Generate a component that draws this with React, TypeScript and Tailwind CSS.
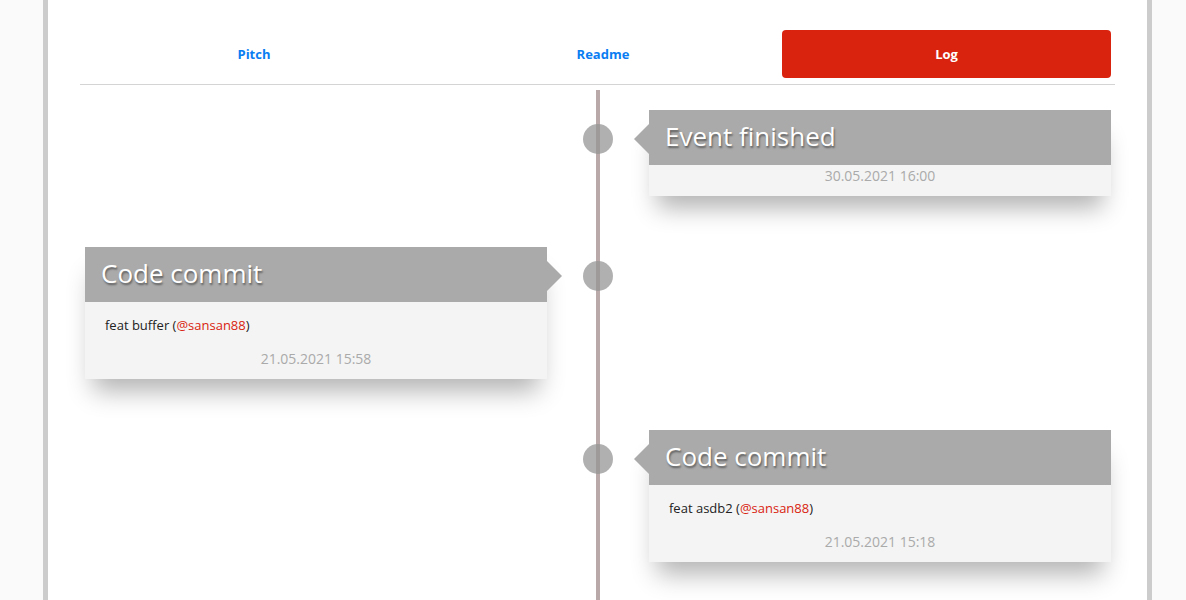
import React from "react";

type Entry = {
  title: string;
  date: string;
  message?: string;
  handle?: string;
  side: "left" | "right";
};

const entries: Entry[] = [
  { title: "Event finished", date: "30.05.2021 16:00", side: "right" },
  {
    title: "Code commit",
    date: "21.05.2021 15:58",
    message: "feat buffer",
    handle: "@sansan88",
    side: "left",
  },
  {
    title: "Code commit",
    date: "21.05.2021 15:18",
    message: "feat asdb2",
    handle: "@sansan88",
    side: "right",
  },
];

const Card = ({ entry }: { entry: Entry }) => {
  return (
    <div className="relative bg-[#f4f4f4] shadow-[0_20px_24px_-8px_rgba(0,0,0,0.3)]">
      {entry.side === "right" ? (
        <span className="absolute left-[-15px] top-[14px] w-0 h-0 border-y-[15px] border-y-transparent border-r-[15px] border-r-[#aaaaaa]" />
      ) : (
        <span className="absolute right-[-15px] top-[14px] w-0 h-0 border-y-[15px] border-y-transparent border-l-[15px] border-l-[#aaaaaa]" />
      )}
      <div className="h-[55px] bg-[#aaaaaa] flex items-center px-4 pb-[3px]">
        <h3 className="text-[26px] leading-none text-white [text-shadow:1px_2px_2px_rgba(0,0,0,0.45)]">
          {entry.title}
        </h3>
      </div>
      {entry.message && (
        <p className="pt-[14px] px-5 text-[13px] leading-[18px] text-[#222] mb-[14px]">
          {entry.message} (
          <a href="#" className="text-[#d9230f]">
            {entry.handle}
          </a>
          )
        </p>
      )}
      <p className="text-center text-sm leading-[21px] text-[#aaaaaa] pb-[10px]">
        {entry.date}
      </p>
    </div>
  );
};

const App = () => {
  return (
    <div className="min-h-screen bg-[#fafafa] font-['Open_Sans',sans-serif]">
      <div className="ml-[43px] w-[1109px] min-h-screen bg-white border-x-[5px] border-[#cccccc] px-8">
        <nav className="pt-[30px] pb-[6px] border-b border-[#d4d4d4] flex">
          <a
            href="#"
            className="w-[348px] h-12 pt-px flex items-center justify-center text-[13px] font-bold text-[#0a7df2]"
          >
            Pitch
          </a>
          <a
            href="#"
            className="w-[350px] h-12 pt-px flex items-center justify-center text-[13px] font-bold text-[#0a7df2]"
          >
            Readme
          </a>
          <a
            href="#"
            className="ml-1 w-[329px] h-12 pt-px flex items-center justify-center rounded bg-[#d9230f] text-[13px] font-bold text-white"
          >
            Log
          </a>
        </nav>

        <div className="relative mt-[5px] pt-5 pb-[80px] px-[5px] flex flex-col gap-[51px]">
          <div className="absolute left-[516px] top-0 bottom-0 w-[4px] bg-[#b9a9a9]" />
          {entries.map((entry, i) => (
            <div key={i} className="grid grid-cols-[462px_102px_462px]">
              <div>{entry.side === "left" && <Card entry={entry} />}</div>
              <div className="flex justify-center">
                <span className="relative z-10 mt-[14px] w-[30px] h-[30px] rounded-full bg-[rgba(150,150,150,0.75)]" />
              </div>
              <div>{entry.side === "right" && <Card entry={entry} />}</div>
            </div>
          ))}
        </div>
      </div>
    </div>
  );
};

export default App;
